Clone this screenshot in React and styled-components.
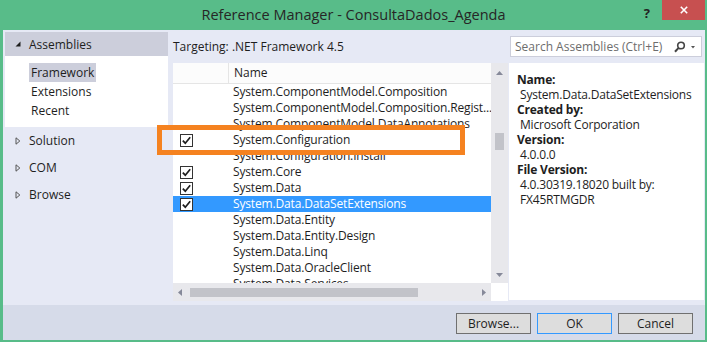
import React from 'react';
import styled, { createGlobalStyle } from 'styled-components';

const GlobalStyle = createGlobalStyle`
  html, body {
    margin: 0;
    padding: 0;
  }
  body {
    font-family: "Open Sans", "Noto Sans", sans-serif;
    font-size: 12px;
    color: #1e1e1e;
    background: #ffffff;
  }
  * {
    box-sizing: border-box;
  }
`;

const Window = styled.div`
  position: relative;
  width: 707px;
  height: 342px;
  background: #58bc89;
  display: flex;
  flex-direction: column;
  overflow: hidden;
`;

const TitleBar = styled.div`
  height: 30px;
  flex: none;
  display: grid;
  grid-template-columns: 1fr auto 1fr;
`;

const Title = styled.div`
  grid-column: 2;
  font-size: 14.5px;
  line-height: 30px;
  color: #262626;
  white-space: nowrap;
`;

const Controls = styled.div`
  display: flex;
  justify-content: flex-end;
  align-items: flex-start;
  padding-right: 2px;
`;

const HelpButton = styled.span`
  font-weight: 700;
  font-size: 13px;
  line-height: 26px;
  margin-right: 12px;
  color: #222;
`;

const CloseButton = styled.div`
  width: 43px;
  height: 20px;
  background: #c75050;
  display: flex;
  align-items: center;
  justify-content: center;
`;

const Body = styled.div`
  flex: 1;
  min-height: 0;
  margin: 0 2px 2px 3px;
  background: #e6e9f5;
  display: flex;
  flex-direction: column;
`;

const Main = styled.div`
  flex: 1;
  min-height: 0;
  display: grid;
  grid-template-columns: 169px 335px 195px;
  grid-template-rows: 33px minmax(0, 1fr);
  column-gap: 1px;
`;

const Nav = styled.div`
  grid-row: 1 / span 2;
  padding: 2px 4px 0 2px;
`;

const NavHeader = styled.div`
  height: 24px;
  display: flex;
  align-items: center;
  gap: 8px;
  padding-left: 10px;
  background: #cccedb;
`;

const NavGroup = styled.div`
  background: #ffffff;
  padding: 7px 0 7px 24px;
`;

const NavItem = styled.div`
  width: fit-content;
  height: 19px;
  line-height: 19px;
  padding: 0 2px;
  background: ${(p) => (p.$active ? '#cccedb' : 'transparent')};
`;

const NavRow = styled.div`
  height: 27px;
  display: flex;
  align-items: center;
  gap: 8px;
  padding-left: 10px;
`;

const Targeting = styled.div`
  display: flex;
  align-items: center;
`;

const SearchCell = styled.div`
  padding: 6px 2px 0 1px;
`;

const SearchBox = styled.div`
  height: 21px;
  background: #ffffff;
  border: 1px solid #cccedb;
  display: flex;
  align-items: center;
  padding: 0 4px 0 4px;
  color: #6d6d6d;
`;

const Placeholder = styled.span`
  flex: 1;
`;

const ListFrame = styled.div`
  display: grid;
  grid-template-columns: minmax(0, 1fr) 17px;
  grid-template-rows: minmax(0, 1fr) 18px;
  background: #ffffff;
  min-height: 0;
`;

const ListArea = styled.div`
  overflow: hidden;
  min-width: 0;
  min-height: 0;
`;

const HeaderRow = styled.div`
  height: 21px;
  display: flex;
  background: #fcfcfc;
  border-bottom: 1px solid #e5e5e5;
`;

const HeaderCheckCol = styled.div`
  width: 56px;
  border-right: 1px solid #e5e5e5;
`;

const HeaderName = styled.div`
  padding-left: 5px;
  line-height: 20px;
`;

const Row = styled.div`
  height: 16px;
  display: flex;
  align-items: center;
  white-space: nowrap;
  letter-spacing: -0.15px;
  background: ${(p) => (p.$selected ? '#3399ff' : 'transparent')};
  color: ${(p) => (p.$selected ? '#ffffff' : '#1e1e1e')};
`;

const CheckCell = styled.div`
  width: 56px;
  flex: none;
  padding-left: 7px;
  display: flex;
  align-items: center;
`;

const CheckBox = styled.div`
  width: 13px;
  height: 13px;
  border: 1px solid #333333;
  background: #ffffff;
  display: flex;
  align-items: center;
  justify-content: center;
`;

const NameCell = styled.div`
  padding-left: 4px;
  line-height: 16px;
`;

const ScrollV = styled.div`
  background: #e8e8ec;
  display: flex;
  flex-direction: column;
  align-items: center;
  min-height: 0;
`;

const ScrollH = styled.div`
  background: #e8e8ec;
  display: flex;
  align-items: center;
`;

const ArrowBox = styled.div`
  flex: none;
  width: ${(p) => p.$w || '17px'};
  height: ${(p) => p.$h || '18px'};
  display: flex;
  align-items: center;
  justify-content: center;
`;

const ThumbV = styled.div`
  flex: none;
  width: 9px;
  height: 17px;
  margin-top: 50px;
  background: #c2c3c9;
`;

const ThumbH = styled.div`
  flex: none;
  height: 9px;
  width: 228px;
  margin-left: 3px;
  background: #c2c3c9;
`;

const Spacer = styled.div`
  flex: 1;
`;

const Corner = styled.div`
  background: #ffffff;
`;

const Details = styled.div`
  background: #ffffff;
  padding: 9px 8px;
  margin-bottom: 1px;
  line-height: 15px;
  letter-spacing: -0.2px;
  white-space: nowrap;
  overflow: hidden;
  min-height: 0;
`;

const Label = styled.div`
  font-weight: 700;
`;

const Value = styled.div`
  padding-left: 3px;
`;

const Footer = styled.div`
  margin-top: 4px;
  height: 35px;
  flex: none;
  background: #d6dbe9;
  display: flex;
  justify-content: flex-end;
  align-items: flex-start;
  gap: 6px;
  padding: 8px 12px 0 0;
`;

const Button = styled.button`
  width: 75px;
  height: 21px;
  padding: 0;
  font-family: inherit;
  font-size: 12px;
  color: #1e1e1e;
  background: #dddddd;
  border: 1px solid ${(p) => (p.$default ? '#3399ff' : '#707070')};
`;

const Highlight = styled.div`
  position: absolute;
  left: 157px;
  top: 125px;
  width: 308px;
  height: 30px;
  border: 5px solid #f58220;
  pointer-events: none;
`;

const Expanded = () => (
  <svg width="6" height="6" viewBox="0 0 6 6">
    <path d="M5.5 0.5 L5.5 5.5 L0.5 5.5 Z" fill="#1e1e1e" />
  </svg>
);

const Collapsed = () => (
  <svg width="6" height="8" viewBox="0 0 6 8">
    <path d="M1 0.8 L4.8 4 L1 7.2 Z" fill="none" stroke="#555" strokeWidth="1" />
  </svg>
);

const Check = () => (
  <svg width="11" height="11" viewBox="0 0 11 11">
    <path d="M1.8 5.6 L4.3 8.2 L9.2 2.3" fill="none" stroke="#1e1e1e" strokeWidth="1.7" />
  </svg>
);

const Arrow = ({ dir }) => {
  const d = {
    up: 'M0 4 L3.5 0 L7 4 Z',
    down: 'M0 0 L7 0 L3.5 4 Z',
    left: 'M4 0 L4 7 L0 3.5 Z',
    right: 'M0 0 L4 3.5 L0 7 Z',
  }[dir];
  const vertical = dir === 'up' || dir === 'down';
  return (
    <svg width={vertical ? 7 : 4} height={vertical ? 4 : 7} viewBox={vertical ? '0 0 7 4' : '0 0 4 7'}>
      <path d={d} fill="#868999" />
    </svg>
  );
};

const SearchIcon = () => (
  <svg width="24" height="12" viewBox="0 0 24 12">
    <circle cx="8" cy="4.5" r="3.3" fill="none" stroke="#444" strokeWidth="1.6" />
    <path d="M5.6 6.9 L2 10.8" stroke="#444" strokeWidth="2" />
    <path d="M18 5 L22 5 L20 7.5 Z" fill="#555" />
  </svg>
);

const CloseIcon = () => (
  <svg width="8" height="8" viewBox="0 0 8 8">
    <path d="M0.8 0.8 L7.2 7.2 M7.2 0.8 L0.8 7.2" stroke="#ffffff" strokeWidth="1.6" />
  </svg>
);

const assemblies = [
  { name: 'System.ComponentModel.Composition' },
  { name: 'System.ComponentModel.Composition.Regist...' },
  { name: 'System.ComponentModel.DataAnnotations' },
  { name: 'System.Configuration', checked: true },
  { name: 'System.Configuration.Install' },
  { name: 'System.Core', checked: true },
  { name: 'System.Data', checked: true },
  { name: 'System.Data.DataSetExtensions', checked: true, selected: true },
  { name: 'System.Data.Entity' },
  { name: 'System.Data.Entity.Design' },
  { name: 'System.Data.Linq' },
  { name: 'System.Data.OracleClient' },
  { name: 'System.Data.Services' },
];

const details = [
  ['Name:', 'System.Data.DataSetExtensions'],
  ['Created by:', 'Microsoft Corporation'],
  ['Version:', '4.0.0.0'],
  ['File Version:', '4.0.30319.18020 built by:', 'FX45RTMGDR'],
];

export default function App() {
  return (
    <>
      <GlobalStyle />
      <Window>
        <TitleBar>
          <Title>Reference Manager - ConsultaDados_Agenda</Title>
          <Controls>
            <HelpButton>?</HelpButton>
            <CloseButton>
              <CloseIcon />
            </CloseButton>
          </Controls>
        </TitleBar>
        <Body>
          <Main>
            <Nav>
              <NavHeader>
                <Expanded />
                Assemblies
              </NavHeader>
              <NavGroup>
                <NavItem $active>Framework</NavItem>
                <NavItem>Extensions</NavItem>
                <NavItem>Recent</NavItem>
              </NavGroup>
              {['Solution', 'COM', 'Browse'].map((label) => (
                <NavRow key={label}>
                  <Collapsed />
                  {label}
                </NavRow>
              ))}
            </Nav>
            <Targeting>Targeting: .NET Framework 4.5</Targeting>
            <SearchCell>
              <SearchBox>
                <Placeholder>Search Assemblies (Ctrl+E)</Placeholder>
                <SearchIcon />
              </SearchBox>
            </SearchCell>
            <ListFrame>
              <ListArea>
                <HeaderRow>
                  <HeaderCheckCol />
                  <HeaderName>Name</HeaderName>
                </HeaderRow>
                {assemblies.map((a) => (
                  <Row key={a.name} $selected={a.selected}>
                    <CheckCell>
                      {a.checked && (
                        <CheckBox>
                          <Check />
                        </CheckBox>
                      )}
                    </CheckCell>
                    <NameCell>{a.name}</NameCell>
                  </Row>
                ))}
              </ListArea>
              <ScrollV>
                <ArrowBox $h="20px">
                  <Arrow dir="up" />
                </ArrowBox>
                <ThumbV />
                <Spacer />
                <ArrowBox $h="16px">
                  <Arrow dir="down" />
                </ArrowBox>
              </ScrollV>
              <ScrollH>
                <ArrowBox $w="14px">
                  <Arrow dir="left" />
                </ArrowBox>
                <ThumbH />
                <Spacer />
                <ArrowBox $w="14px">
                  <Arrow dir="right" />
                </ArrowBox>
              </ScrollH>
              <Corner />
            </ListFrame>
            <Details>
              {details.map(([label, ...values]) => (
                <React.Fragment key={label}>
                  <Label>{label}</Label>
                  {values.map((v) => (
                    <Value key={v}>{v}</Value>
                  ))}
                </React.Fragment>
              ))}
            </Details>
          </Main>
          <Footer>
            <Button>Browse...</Button>
            <Button $default>OK</Button>
            <Button>Cancel</Button>
          </Footer>
        </Body>
        <Highlight />
      </Window>
    </>
  );
}
